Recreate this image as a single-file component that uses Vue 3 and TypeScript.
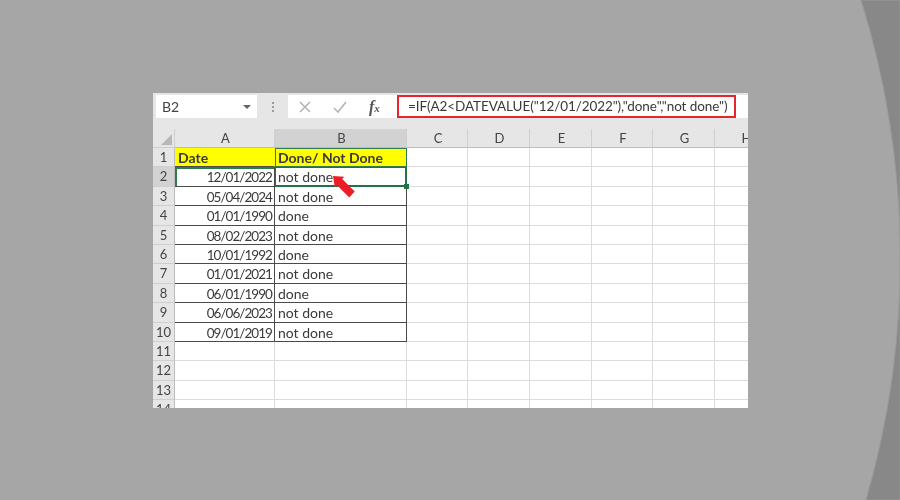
<script setup lang="ts">
const columns = ['A', 'B', 'C', 'D', 'E', 'F', 'G', 'H']
const rows: [string, string][] = [
  ['12/01/2022', 'not done'],
  ['05/04/2024', 'not done'],
  ['01/01/1990', 'done'],
  ['08/02/2023', 'not done'],
  ['10/01/1992', 'done'],
  ['01/01/2021', 'not done'],
  ['06/01/1990', 'done'],
  ['06/06/2023', 'not done'],
  ['09/01/2019', 'not done'],
]
const emptyRows = [11, 12, 13, 14]
const trailing = 6
</script>

<template>
  <div class="page">
    <svg class="backdrop" viewBox="0 0 900 500" width="900" height="500" aria-hidden="true">
      <path d="M861 0 A 868 868 0 0 1 866 500 L 900 500 L 900 0 Z" fill="#888888" stroke="#999999" stroke-width="1" />
    </svg>
    <div class="excel">
      <div class="formula-bar">
        <div class="name-box">
          <span>B2</span>
          <i class="caret"></i>
        </div>
        <div class="grip"><b></b><b></b><b></b></div>
        <div class="buttons">
          <svg width="14" height="14" viewBox="0 0 14 14"><path d="M2 2 L12 12 M12 2 L2 12" stroke="#b4b4b4" stroke-width="1.6" fill="none" /></svg>
          <svg width="16" height="14" viewBox="0 0 16 14"><path d="M2 8 L6 12 L14 2" stroke="#b4b4b4" stroke-width="1.6" fill="none" /></svg>
          <span class="fx">f<small>x</small></span>
        </div>
        <div class="formula-input">
          <div class="formula">=IF(A2&lt;DATEVALUE("12/01/2022"),"done","not done")</div>
        </div>
      </div>
      <div class="sheet">
        <div class="corner"><i></i></div>
        <div v-for="c in columns" :key="c" class="col-head" :class="{ active: c === 'B' }">{{ c }}</div>

        <div class="row-head">1</div>
        <div class="cell title">Date</div>
        <div class="cell title title-b">Done/ Not Done</div>
        <div v-for="n in trailing" :key="'t1' + n" class="cell"></div>

        <template v-for="(r, i) in rows" :key="i">
          <div class="row-head" :class="{ active: i === 0 }">{{ i + 2 }}</div>
          <div class="cell data date" :class="{ 'sel-left': i === 0 }">{{ r[0] }}</div>
          <div class="cell data text" :class="{ selected: i === 0 }">
            {{ r[1] }}
            <i v-if="i === 0" class="handle"></i>
          </div>
          <div v-for="n in trailing" :key="n" class="cell"></div>
        </template>

        <template v-for="n in emptyRows" :key="'e' + n">
          <div class="row-head">{{ n }}</div>
          <div v-for="c in columns" :key="c" class="cell"></div>
        </template>

        <svg class="arrow" width="26" height="24" viewBox="0 0 26 24" aria-hidden="true">
          <path d="M1 1 L12.2 1.8 L10.2 4 L22.7 16.5 L17.3 22.5 L4.8 10 L2.8 12.2 Z" fill="#ee1c25" />
        </svg>
      </div>
    </div>
  </div>
</template>

<style>
html, body { margin: 0; padding: 0; }
</style>

<style scoped>
.page {
  position: relative;
  width: 900px;
  height: 500px;
  overflow: hidden;
  background: #a6a6a6;
  box-sizing: border-box;
  padding: 93px 0 0 153px;
  font-family: Lato, "Liberation Sans", sans-serif;
}
.backdrop { position: absolute; left: 0; top: 0; }
.excel {
  position: relative;
  width: 595px;
  height: 315px;
  overflow: hidden;
  background: #e6e6e6;
  filter: blur(0.55px);
  display: flex;
  flex-direction: column;
}
.formula-bar {
  height: 36px;
  flex: none;
  box-sizing: border-box;
  padding: 2px 0 0 3px;
  display: flex;
  align-items: flex-start;
}
.name-box {
  width: 101px;
  height: 23px;
  background: #fff;
  box-sizing: border-box;
  padding: 0 4px 0 6px;
  display: flex;
  align-items: center;
  justify-content: space-between;
  font-size: 14px;
  color: #444;
}
.caret {
  width: 0;
  height: 0;
  border-left: 4px solid transparent;
  border-right: 4px solid transparent;
  border-top: 4px solid #666;
  margin-right: 2px;
}
.grip {
  width: 31px;
  height: 23px;
  display: flex;
  flex-direction: column;
  align-items: center;
  justify-content: center;
  gap: 2px;
}
.grip b { width: 2px; height: 2px; background: #9a9a9a; }
.buttons {
  width: 108px;
  height: 23px;
  background: #fff;
  display: flex;
  align-items: center;
  box-sizing: border-box;
  padding-left: 10px;
  gap: 20px;
}
.fx {
  font-family: "Liberation Serif", serif;
  font-style: italic;
  font-size: 16px;
  color: #555;
  font-weight: bold;
  margin-left: 1px;
}
.fx small { font-size: 11px; }
.formula-input {
  flex: 1;
  height: 23px;
  background: #fff;
  padding-left: 1px;
}
.formula {
  width: 339px;
  height: 23px;
  box-sizing: border-box;
  border: 2px solid #e8242c;
  font-size: 13.5px;
  letter-spacing: -0.08px;
  line-height: 19px;
  padding-left: 9px;
  color: #3a3a3a;
  white-space: nowrap;
  background: #fff;
}
.sheet {
  position: relative;
  flex: 1;
  display: grid;
  grid-template-columns: 22px 100px 132px 61px 62px 62px 61px 62px 62px;
  grid-auto-rows: 19.42px;
  grid-template-rows: 19px;
  background: #fff;
  font-size: 14px;
  color: #3a3a3a;
}
.corner {
  background: #e6e6e6;
  border-right: 1px solid #cfcfcf;
  border-bottom: 1px solid #cfcfcf;
  position: relative;
}
.corner i {
  position: absolute;
  right: 2px;
  bottom: 2px;
  width: 0;
  height: 0;
  border-left: 11px solid transparent;
  border-bottom: 11px solid #b8b8b8;
}
.col-head {
  background: #e6e6e6;
  border-right: 1px solid #cfcfcf;
  border-bottom: 1px solid #bdbdbd;
  text-align: center;
  line-height: 19px;
  font-size: 13px;
  color: #444;
  box-sizing: border-box;
  padding-left: 2px;
}
.col-head.active { background: #d2d2d2; }
.row-head {
  background: #e6e6e6;
  border-right: 1px solid #bdbdbd;
  border-bottom: 1px solid #cfcfcf;
  text-align: center;
  line-height: 19px;
  font-size: 13px;
  color: #444;
  box-sizing: border-box;
}
.row-head.active { background: #d2d2d2; }
.cell {
  box-sizing: border-box;
  border-right: 1px solid #dcdcdc;
  border-bottom: 1px solid #dcdcdc;
  line-height: 19px;
  padding: 0 2px 0 3px;
  white-space: nowrap;
  overflow: hidden;
}
.title {
  background: #ffff00;
  font-weight: bold;
  border-right-color: #ffff00;
  border-bottom-color: #4a4a4a;
}
.title-b {
  border-right-color: #4a4a4a;
  outline: 1px solid #2f7d4f;
  outline-offset: -1px;
}
.data {
  border-right: 1px solid #4a4a4a;
  border-bottom: 1px solid #4a4a4a;
}
.date {
  text-align: right;
  font-size: 13.5px;
  letter-spacing: -0.95px;
  padding-top: 1px;
}
.sel-left { box-shadow: inset 2px 2px 0 #2f7d4f; }
.selected {
  position: relative;
  overflow: visible;
  box-shadow: inset 0 0 0 1px #217346;
  border-color: #217346;
  z-index: 1;
}
.handle {
  position: absolute;
  right: -3px;
  bottom: -3px;
  width: 5px;
  height: 5px;
  background: #217346;
}
.arrow {
  position: absolute;
  left: 179px;
  top: 46px;
  z-index: 2;
}
</style>
